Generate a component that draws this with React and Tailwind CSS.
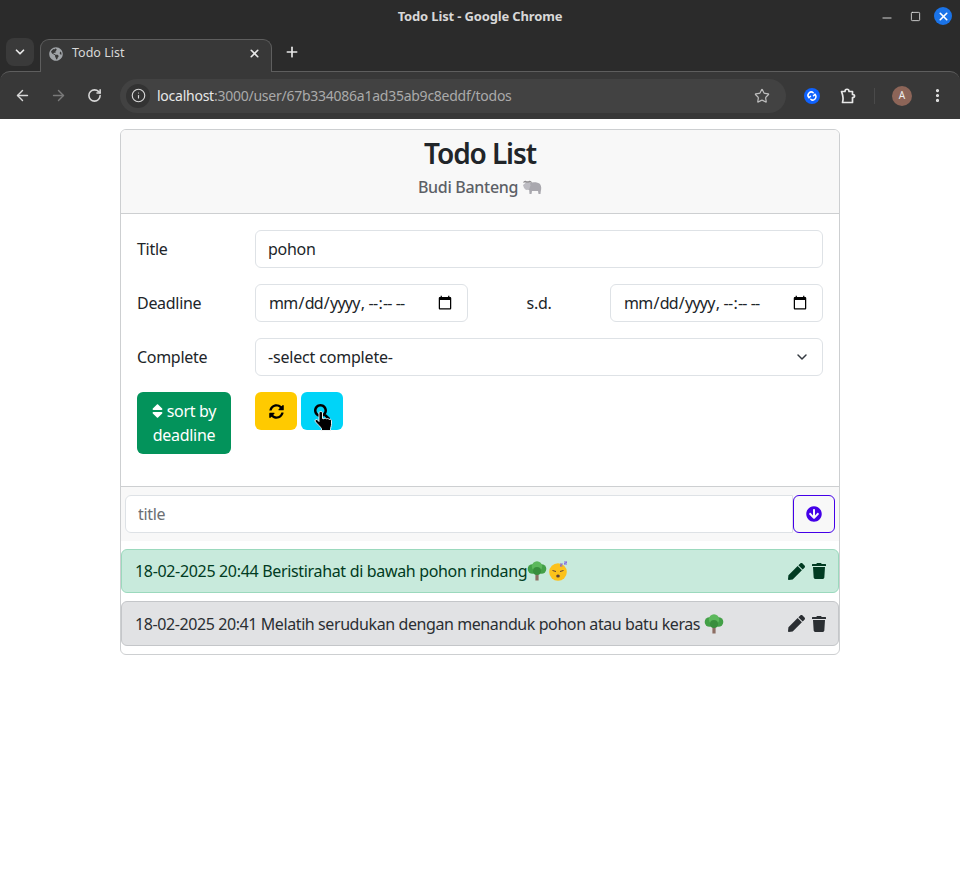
import { FaSort, FaSyncAlt, FaSearch, FaArrowCircleDown, FaPen, FaTrash, FaGlobeAmericas } from 'react-icons/fa'
import { ArrowLeft, ArrowRight, RotateCw, Info, Star, Plus, X, ChevronDown, Minus, Square, EllipsisVertical } from 'lucide-react'

const font = { fontFamily: '"Noto Sans", sans-serif' }

function TreeEmoji() {
  return (
    <svg viewBox="0 0 20 20" className="inline-block w-[20px] h-[20px] align-[-4px]">
      <rect x="8.4" y="11" width="3.2" height="8.5" fill="#8d6e63" />
      <circle cx="5.500" cy="8" r="4.800" fill="#43a047" />
      <circle cx="14.500" cy="8" r="4.800" fill="#43a047" />
      <circle cx="10" cy="5.400" r="5.200" fill="#5cb85c" />
      <circle cx="10" cy="10" r="4" fill="#388e3c" />
    </svg>
  )
}

function SleepEmoji() {
  return (
    <svg viewBox="0 0 20 20" className="inline-block w-[20px] h-[20px] align-[-4px] ml-[1px]">
      <circle cx="10" cy="11" r="8.800" fill="#fcc21b" />
      <path d="M4.500 9.500l3.500 1M15.500 9.500l-3.500 1" stroke="#5d4037" strokeWidth="1" fill="none" />
      <ellipse cx="10" cy="15" rx="1.800" ry="1.500" fill="#5d4037" />
      <path d="M12 3h2.500l-2.500 2h2.500M16 1h3l-3 2h3" stroke="#7c5ce0" strokeWidth="0.900" fill="none" />
    </svg>
  )
}

function BuffaloEmoji() {
  return (
    <svg viewBox="0 0 20 20" className="inline-block w-[20px] h-[20px] align-[-4px]">
      <path d="M7 6c4-1.500 9-1 11 1 1.500 2 1.500 5 .8 7l-.3 3h-2l-.5-3H10l-.5 3h-2l-.3-4-2.500-1z" fill="#a9a8ae" />
      <path d="M1 8l3-2.500h4l.5 3-1.500 4-3 .5-2-2z" fill="#bdbcc2" />
      <path d="M1 6c.5-2 2-2.500 3-2 1 .3 2 .3 3 0 1.500-.5 2.500.5 3 2-1.500-.8-2.500-.6-3.500-.2H4.500C3 5.400 2 5.400 1 6z" fill="#8f8d90" />
    </svg>
  )
}

function ShazamIcon() {
  return (
    <svg viewBox="0 0 16 16" className="ml-[18px] w-[16px] h-[16px]">
      <circle cx="8" cy="8" r="8" fill="#0f62fe" />
      <path d="M9.200 4.800C8 3.600 6.400 3.600 5 5 3.600 6.400 3.800 8.400 5 9.600l1.500-1.400M6.800 11.200c1.200 1.200 2.800 1.200 4.200-.2 1.400-1.400 1.200-3.400 0-4.600L9.500 7.800" stroke="#fff" strokeWidth="1.500" fill="none" strokeLinecap="round" />
    </svg>
  )
}

function ExtensionIcon() {
  return (
    <svg viewBox="0 0 16 16" className="ml-[20px] w-[16px] h-[16px]">
      <path d="M1.500 3.500H5C5 .500 9 .500 9 3.500h3.500v3c2.700 0 2.700 3 0 3v5H2.500C3.500 11.500 3 7.500 1.500 3.500z" stroke="#e8e8e8" strokeWidth="1.700" fill="none" strokeLinejoin="round" />
    </svg>
  )
}

function HandCursor() {
  return (
    <svg viewBox="0 0 20 20" className="absolute left-[12px] top-[19px] w-[20px] h-[20px]">
      <path
        d="M6 2c0-2 3.500-2 3.500 0v5.500l1.500.3c.8-1 2.200-.8 2.600.2.800-.8 2.200-.5 2.500.5.800-.5 2.400-.2 2.400 1.200v4c0 1.500-.8 2.300-1 4v1.800H8.500v-1.800c-1-2-3.500-4-6-6.800-1.200-1.400.2-3 1.800-2.200L6 10.500z"
        fill="#000"
        stroke="#fff"
        strokeWidth="0.900"
      />
    </svg>
  )
}

function TitleBar() {
  return (
    <div className="relative flex items-center justify-center h-[33px] pt-[1px]">
      <span className="text-[13px] font-bold tracking-[-0.15px] text-[#d8d8d8]">Todo List - Google Chrome</span>
      <div className="absolute right-[8px] top-[7px] flex items-center">
        <Minus size={14} strokeWidth={1.500} className="text-[#e8e8e8] translate-y-[2px]" />
        <Square size={11} strokeWidth={1.800} className="ml-[16px] text-[#e8e8e8]" />
        <div className="ml-[13px] w-[18px] h-[18px] rounded-full bg-[#1a73e8] flex items-center justify-center">
          <X size={13} strokeWidth={3} className="text-white" />
        </div>
      </div>
    </div>
  )
}

function TabStrip() {
  return (
    <div className="flex items-end h-[38px] pl-[6px]">
      <div className="w-[28px] h-[28px] mb-[5px] rounded-[8px] bg-[#3a3a3a] flex items-center justify-center">
        <ChevronDown size={14} strokeWidth={3} className="text-[#e8e8e8]" />
      </div>
      <div className="ml-[6px] w-[232px] h-[33px] rounded-t-[9px] bg-[#383838] border border-b-0 border-[#5e5e5e] flex items-center pl-[8px] pr-[10px] pb-[5px] relative z-10 -mb-[1px]">
        <FaGlobeAmericas size={14} className="flex-none text-[#a0a4a8]" />
        <span className="ml-[9px] text-[12.500px] text-[#d8d8d8]">Todo List</span>
        <X size={13} strokeWidth={3} className="ml-auto text-[#e8e8e8]" />
      </div>
      <Plus size={16} strokeWidth={2.500} className="ml-[12px] mb-[11px] text-[#e8e8e8]" />
    </div>
  )
}

function Toolbar() {
  return (
    <div className="flex items-center h-[48px] bg-[#383838] border-t border-[#5e5e5e] rounded-t-[10px] pl-[14px] pr-[14px]">
      <ArrowLeft size={17} strokeWidth={2} className="text-[#d8d8d8]" />
      <ArrowRight size={17} strokeWidth={2} className="ml-[19px] text-[#7a7a7a]" />
      <RotateCw size={15} strokeWidth={2.500} className="ml-[20px] text-[#d8d8d8]" />
      <div className="ml-[18px] w-[666px] h-[34px] rounded-full bg-[#424242] flex items-center pl-[6px] pr-[16px]">
        <div className="w-[24px] h-[24px] rounded-full bg-[#333333] flex items-center justify-center">
          <Info size={15} strokeWidth={1.800} className="text-[#d8d8d8]" />
        </div>
        <span className="ml-[7px] text-[14px] tracking-[-0.25px] text-[#e8e8e8] whitespace-nowrap">
          localhost<span className="text-[#aaaaaa]">:3000/user/67b334086a1ad35ab9c8eddf/todos</span>
        </span>
        <Star size={16} strokeWidth={1.800} className="ml-auto text-[#bdbdbd]" />
      </div>
      <ShazamIcon />
      <ExtensionIcon />
      <div className="ml-[18px] w-[1px] h-[16px] bg-[#4a4a4a]" />
      <div className="ml-[17px] w-[20px] h-[20px] rounded-full bg-[#8d6558] flex items-center justify-center text-[#eeeeee] text-[10px]">
        A
      </div>
      <EllipsisVertical size={17} strokeWidth={2.500} className="ml-[17px] text-[#e8e8e8]" />
    </div>
  )
}

function FormRow({ label, children }) {
  return (
    <div className="flex items-center mb-[16px]">
      <label className="w-[118px] flex-none">{label}</label>
      {children}
    </div>
  )
}

const inputClass = 'h-[38px] px-[12px] rounded-[6px] border border-[#dee2e6] bg-white text-[#212529] outline-none'

export default function App() {
  return (
    <div className="min-h-[892px] bg-white text-[16px] tracking-[-0.3px] text-[#212529]" style={font}>
      <div className="bg-[#2b2b2b] tracking-normal">
        <TitleBar />
        <TabStrip />
        <Toolbar />
      </div>

      <div className="mx-auto mt-[10px] w-[720px] border border-[#cdcfd1] rounded-[6px] overflow-hidden">
        <div className="h-[84px] bg-[#f8f8f8] border-b border-[#cdcfd1] flex flex-col items-center pt-[6px]">
          <h3 className="text-[28px] font-semibold tracking-[-1.1px] leading-[34px]">Todo List</h3>
          <h6 className="mt-[7px] text-[16px] font-medium leading-[19px] text-[#5c6066]">
            Budi Banteng <BuffaloEmoji />
          </h6>
        </div>

        <div className="h-[273px] px-[16px] pt-[16px] border-b border-[#cdcfd1]">
          <FormRow label="Title">
            <input className={`${inputClass} w-[568px]`} defaultValue="pohon" />
          </FormRow>
          <FormRow label="Deadline">
            <input type="datetime-local" className={`${inputClass} w-[213px] tracking-[-0.75px]`} />
            <span className="w-[142px] text-center">s.d.</span>
            <input type="datetime-local" className={`${inputClass} w-[213px] tracking-[-0.75px]`} />
          </FormRow>
          <FormRow label="Complete">
            <div className="relative w-[568px]">
              <select className={`${inputClass} w-full appearance-none tracking-[-0.18px]`}>
                <option>-select complete-</option>
              </select>
              <ChevronDown size={16} strokeWidth={2.200} className="absolute right-[13px] top-[11px] text-[#343a40]" />
            </div>
          </FormRow>
          <div className="flex items-start">
            <button className="w-[94px] h-[62px] rounded-[6px] bg-[#03935b] text-white leading-[24px]">
              <FaSort className="inline-block align-[-3px] w-[11px] h-[18px]" /> sort by deadline
            </button>
            <button className="ml-[24px] w-[42px] h-[38px] rounded-[6px] bg-[#ffca00] flex items-center justify-center">
              <FaSyncAlt size={15} className="text-black" />
            </button>
            <button className="relative ml-[4px] w-[42px] h-[38px] rounded-[6px] bg-[#00d4f8] flex items-center justify-center">
              <FaSearch size={16} className="text-black translate-y-[1px]" />
              <HandCursor />
            </button>
          </div>
        </div>

        <div className="flex h-[54px] items-center px-[4px] bg-[#f8f8f8]">
          <input className={`${inputClass} flex-1 rounded-r-none placeholder:text-[#6c6f73]`} placeholder="title" />
          <button className="w-[42px] h-[38px] rounded-[6px] border border-[#4400e8] flex items-center justify-center">
            <FaArrowCircleDown size={16} className="text-[#4400e8]" />
          </button>
        </div>

        <div className="flex flex-col gap-[8px] pt-[8px] pb-[8px]">
          <div className="h-[44px] flex items-center pl-[13px] pr-[11px] rounded-[6px] bg-[#c8eadc] border border-[#9bd9bd] text-[#013b22] tracking-[-0.33px]">
            <span>18-02-2025 20:44 Beristirahat di bawah pohon rindang<TreeEmoji /><SleepEmoji /></span>
            <FaPen size={17} className="ml-auto" />
            <FaTrash size={16} className="ml-[6px]" />
          </div>
          <div className="h-[45px] flex items-center pl-[13px] pr-[11px] rounded-[6px] bg-[#e1e2e4] border border-[#c4c6c9] text-[#2b2f33] tracking-[-0.41px]">
            <span>18-02-2025 20:41 Melatih serudukan dengan menanduk pohon atau batu keras <TreeEmoji /></span>
            <FaPen size={17} className="ml-auto" />
            <FaTrash size={16} className="ml-[6px]" />
          </div>
        </div>
      </div>
    </div>
  )
}
